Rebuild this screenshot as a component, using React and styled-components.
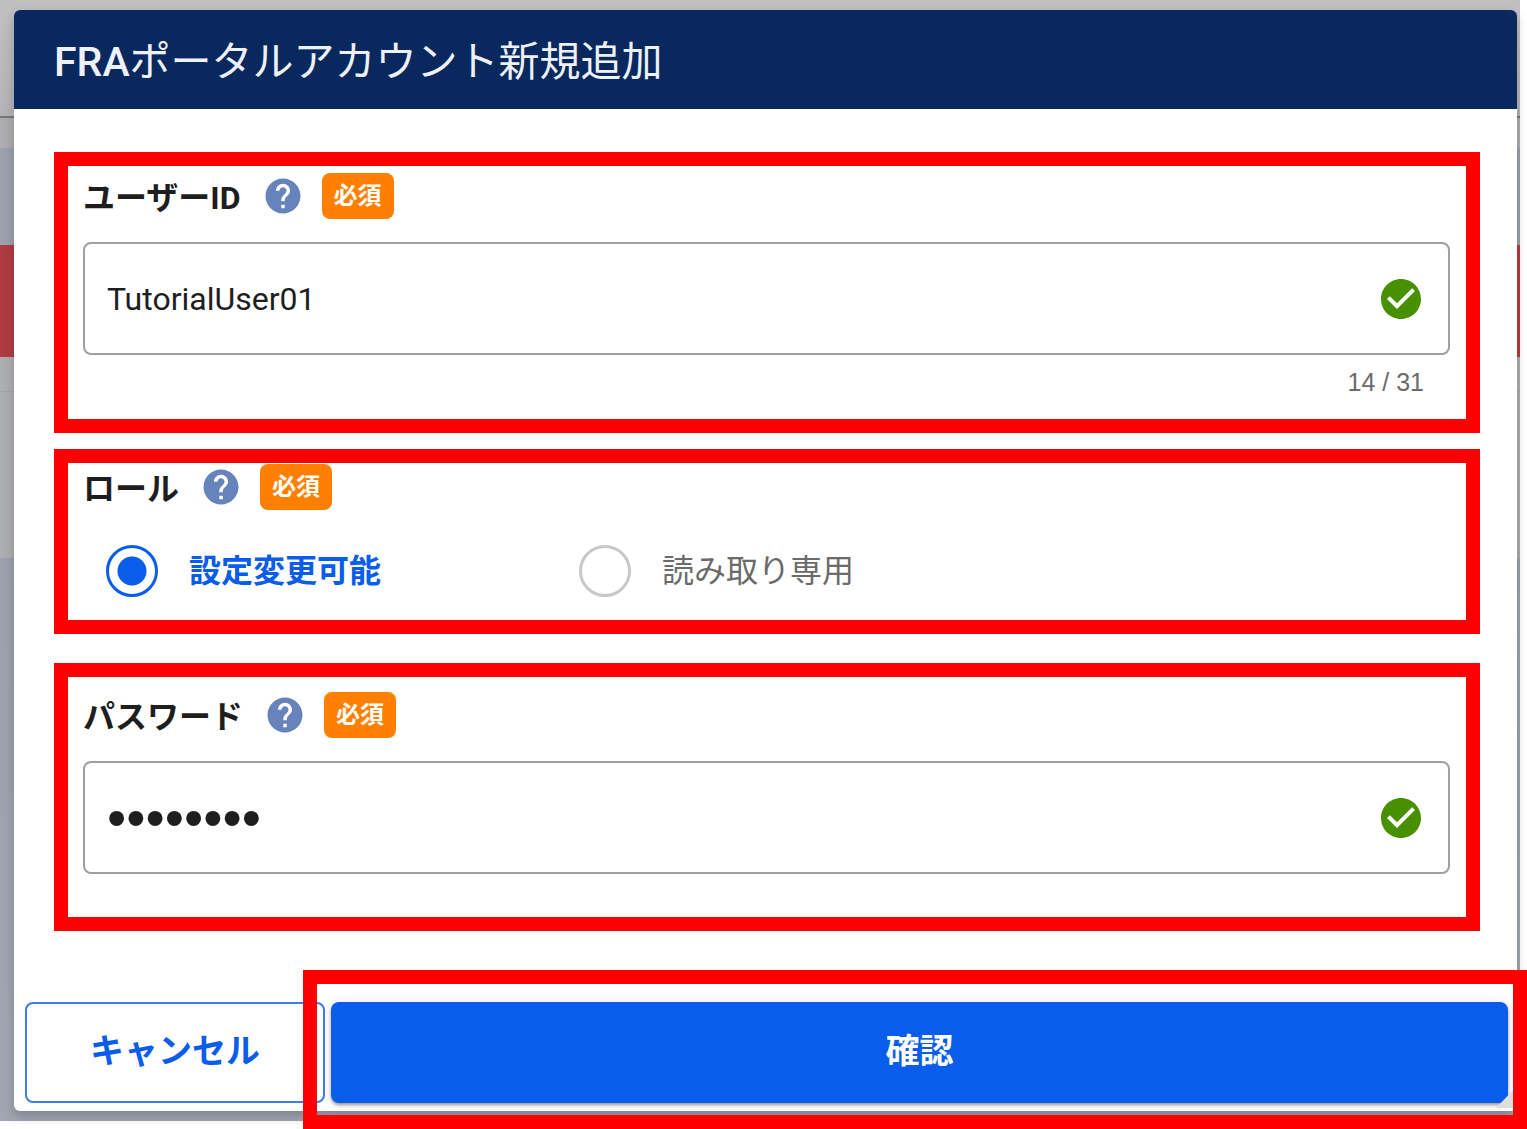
import React, { useState } from "react";
import styled, { createGlobalStyle, css } from "styled-components";
import { MdHelp, MdCheckCircle } from "react-icons/md";

const MAX_ID_LENGTH = 31;

const ROLES = [
    { value: "editor", label: "設定変更可能" },
    { value: "viewer", label: "読み取り専用" },
];

const FieldLabel = ({ as, htmlFor, id, children }) => (
    <LabelRow>
        <Label as={as} htmlFor={htmlFor} id={id}>{children}</Label>
        <HelpButton type="button" aria-label="ヘルプ"><MdHelp /></HelpButton>
        <Required>必須</Required>
    </LabelRow>
);

export default () => {
    const [userId, setUserId] = useState("TutorialUser01");
    const [role, setRole] = useState("editor");
    const [password, setPassword] = useState("password");

    return (
        <>
            <GlobalStyle />
            <Backdrop>
                <Dialog role="dialog" aria-labelledby="dialog-title">
                    <Header>
                        <Title id="dialog-title"><b>FRA</b>ポータルアカウント新規追加</Title>
                    </Header>
                    <Body>
                        <UserSection>
                            <FieldLabel htmlFor="user-id">ユーザーID</FieldLabel>
                            <Field>
                                <Input
                                    id="user-id"
                                    type="text"
                                    maxLength={MAX_ID_LENGTH}
                                    value={userId}
                                    onChange={e => setUserId(e.target.value)}
                                />
                                <MdCheckCircle />
                            </Field>
                            <Counter>{userId.length} / {MAX_ID_LENGTH}</Counter>
                        </UserSection>

                        <RoleSection role="radiogroup" aria-labelledby="role-label">
                            <FieldLabel as="span" id="role-label">ロール</FieldLabel>
                            <Options>
                                {ROLES.map(({ value, label }) => (
                                    <Option key={value} $checked={role === value}>
                                        <Radio
                                            type="radio"
                                            name="role"
                                            value={value}
                                            checked={role === value}
                                            onChange={() => setRole(value)}
                                        />
                                        {label}
                                    </Option>
                                ))}
                            </Options>
                        </RoleSection>

                        <PasswordSection>
                            <FieldLabel htmlFor="password">パスワード</FieldLabel>
                            <Field>
                                <PasswordInput
                                    id="password"
                                    type="password"
                                    value={password}
                                    onChange={e => setPassword(e.target.value)}
                                />
                                <MdCheckCircle />
                            </Field>
                        </PasswordSection>
                    </Body>
                    <Footer>
                        <CancelButton type="button">キャンセル</CancelButton>
                        <ConfirmArea>
                            <ConfirmButton type="button">確認</ConfirmButton>
                        </ConfirmArea>
                    </Footer>
                </Dialog>
            </Backdrop>
        </>
    );
}

const GlobalStyle = createGlobalStyle`
    *, *::before, *::after {
        box-sizing: border-box;
    }

    body {
        margin: 0;
        background: #fff;
        color: #1e1e1e;
        font-family: Roboto, 'Noto Sans CJK JP', sans-serif;
    }

    button, input {
        font-family: inherit;
    }
`

// The dimmed list page shows as bands behind the dialog
const Backdrop = styled.div`
    margin: 0 7px 8px 0;
    padding: 10px 3px 10px 14px;
    background: linear-gradient(
        #c0c0c1 0, #b4b4b6 116px,
        #77777b 116px, #77777b 118px,
        #adadb0 118px, #adadb0 148px,
        #9da1ad 148px, #9da1ad 245px,
        #b03c42 245px, #b03c42 357px,
        #adaeb1 357px, #adaeb1 391px,
        #a2a3ab 391px, #a2a3ab 392px,
        #adaeb1 392px, #adaeb1 558px,
        #9da1ad 558px, #a2a6b2 100%
    );
`

const Dialog = styled.div`
    position: relative;
    display: flex;
    flex-direction: column;
    border-radius: 6px;
    background: #fff;
    box-shadow: 0 6px 12px rgba(0, 0, 0, 0.2);

    /* resize grip */
    &::after {
        content: "";
        position: absolute;
        right: 0;
        bottom: 3px;
        width: 21px;
        height: 22px;
        background: #dedede;
        clip-path: polygon(100% 0, 100% 100%, 0 100%);
    }
`

const Header = styled.header`
    display: flex;
    align-items: center;
    height: 99px;
    padding: 4px 40px 0;
    border-radius: 6px 6px 0 0;
    background: #08285e;
`

const Title = styled.h1`
    margin: 0;
    color: #eef1f8;
    font-size: 41px;
    font-weight: 400;
    line-height: 60px;

    b {
        font-weight: 500;
    }
`

const Body = styled.div`
    padding: 43px 37px 71px 40px;
`

const Section = styled.section`
    border: 14px solid #f00;
`

const UserSection = styled(Section)`
    padding: 7px 16px 23px 15px;
`

const RoleSection = styled(Section)`
    margin-top: 16px;
    padding: 1px 16px 23px 15px;
`

const PasswordSection = styled(Section)`
    margin-top: 29px;
    padding: 15px 16px 43px 15px;
`

const LabelRow = styled.div`
    display: flex;
    align-items: center;
    height: 46px;
`

const Label = styled.label`
    padding-top: 4px;
    font-size: 32px;
    font-weight: 700;
    line-height: 46px;
`

const HelpButton = styled.button`
    display: flex;
    margin: 0 18px 0 21px;
    padding: 0;
    border: 0;
    background: none;
    color: #6683bb;
    font-size: 42px;
    cursor: pointer;
`

const Required = styled.span`
    padding: 0 12px;
    border-radius: 8px;
    background: #ff7f00;
    color: #fff;
    font-size: 24px;
    font-weight: 700;
    line-height: 46px;
`

const Field = styled.div`
    display: flex;
    align-items: center;
    height: 113px;
    margin-top: 23px;
    padding: 0 23px 0 22px;
    border: 2px solid #a0a0a0;
    border-radius: 8px;

    svg {
        flex: none;
        color: #479100;
        font-size: 48px;
    }
`

const Input = styled.input`
    flex: 1;
    min-width: 0;
    height: 100%;
    padding: 0;
    border: 0;
    outline: 0;
    background: none;
    color: #1e1e1e;
    font-size: 32px;
`

const PasswordInput = styled(Input)`
    font-family: 'Liberation Sans', sans-serif;
    font-size: 55px;
`

const Counter = styled.div`
    margin-top: 13px;
    padding-right: 26px;
    color: #6b6b6b;
    font-family: 'Liberation Sans', sans-serif;
    font-size: 25px;
    line-height: 28px;
    text-align: right;
`

const Options = styled.div`
    display: flex;
    gap: 198px;
    margin-top: 35px;
    padding-left: 23px;
`

const Option = styled.label`
    display: flex;
    align-items: center;
    gap: 31px;
    color: ${({ $checked }) => ($checked ? "#0a5cea" : "#6b6b6b")};
    font-size: 32px;
    font-weight: ${({ $checked }) => ($checked ? 700 : 400)};
    line-height: 48px;
    white-space: nowrap;
    cursor: pointer;
`

const Radio = styled.input`
    appearance: none;
    width: 52px;
    height: 52px;
    margin: 0;
    border: 3px solid #c8c8c8;
    border-radius: 50%;

    &:checked {
        border-color: #0a5cea;
        background: radial-gradient(circle, #0a5cea 14px, transparent 15px);
    }
`

const Footer = styled.footer`
    display: flex;
    gap: 6px;
    padding: 0 9px 8px 11px;
`

const buttonStyles = css`
    height: 101px;
    padding: 0 0 8px;
    border-radius: 8px;
    font-size: 34px;
    font-weight: 700;
    cursor: pointer;
`

const CancelButton = styled.button`
    ${buttonStyles}
    width: 300px;
    border: 2px solid #3a7bee;
    background: #fff;
    color: #0a5cea;
`

const ConfirmArea = styled.div`
    position: relative;
    flex: 1;

    &::after {
        content: "";
        position: absolute;
        z-index: 1;
        inset: -32px -19px -26px -28px;
        border: 14px solid #f00;
        pointer-events: none;
    }
`

const ConfirmButton = styled.button`
    ${buttonStyles}
    display: block;
    width: 100%;
    border: 0;
    background: #0a5cea;
    color: #fff;
    box-shadow: 0 2px 3px rgba(0, 0, 0, 0.35), 0 2px 12px rgba(0, 0, 0, 0.12);
`
